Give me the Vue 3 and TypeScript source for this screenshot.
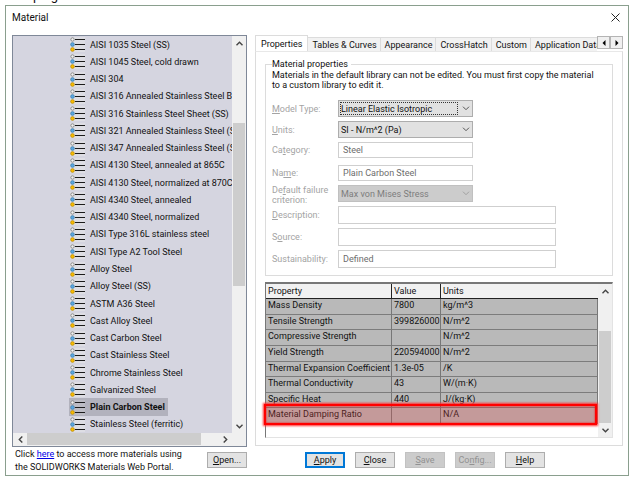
<script setup lang="ts">
import { ref } from 'vue'

interface Field {
  id: string
  label: [string, string, string]
  kind: 'select' | 'input'
  value: string
  disabled?: boolean
  wide?: boolean
  spaced?: boolean
}

const materials: string[] = [
  'AISI 1035 Steel (SS)',
  'AISI 1045 Steel, cold drawn',
  'AISI 304',
  'AISI 316 Annealed Stainless Steel Bar (SS)',
  'AISI 316 Stainless Steel Sheet (SS)',
  'AISI 321 Annealed Stainless Steel (SS)',
  'AISI 347 Annealed Stainless Steel (SS)',
  'AISI 4130 Steel, annealed at 865C',
  'AISI 4130 Steel, normalized at 870C',
  'AISI 4340 Steel, annealed',
  'AISI 4340 Steel, normalized',
  'AISI Type 316L stainless steel',
  'AISI Type A2 Tool Steel',
  'Alloy Steel',
  'Alloy Steel (SS)',
  'ASTM A36 Steel',
  'Cast Alloy Steel',
  'Cast Carbon Steel',
  'Cast Stainless Steel',
  'Chrome Stainless Steel',
  'Galvanized Steel',
  'Plain Carbon Steel',
  'Stainless Steel (ferritic)',
]
const selected = ref('Plain Carbon Steel')

const tabs: string[] = ['Properties', 'Tables & Curves', 'Appearance', 'CrossHatch', 'Custom', 'Application Data']
const activeTab = ref('Properties')

const fields: Field[] = [
  { id: 'model', label: ['', 'M', 'odel Type:'], kind: 'select', value: 'Linear Elastic Isotropic' },
  { id: 'units', label: ['', 'U', 'nits:'], kind: 'select', value: 'SI - N/m^2 (Pa)' },
  { id: 'category', label: ['Ca', 't', 'egory:'], kind: 'input', value: 'Steel' },
  { id: 'name', label: ['Na', 'm', 'e:'], kind: 'input', value: 'Plain Carbon Steel', spaced: true },
  { id: 'failure', label: ['De', 'f', 'ault failure criterion:'], kind: 'select', value: 'Max von Mises Stress', disabled: true },
  { id: 'description', label: ['', 'D', 'escription:'], kind: 'input', value: '', wide: true },
  { id: 'source', label: ['S', 'o', 'urce:'], kind: 'input', value: '', wide: true },
  { id: 'sustainability', label: ['Sustainability:', '', ''], kind: 'input', value: 'Defined', wide: true },
]

const rows: [string, string, string][] = [
  ['Mass Density', '7800', 'kg/m^3'],
  ['Tensile Strength', '399826000', 'N/m^2'],
  ['Compressive Strength', '', 'N/m^2'],
  ['Yield Strength', '220594000', 'N/m^2'],
  ['Thermal Expansion Coefficient', '1.3e-05', '/K'],
  ['Thermal Conductivity', '43', 'W/(m·K)'],
  ['Specific Heat', '440', 'J/(kg·K)'],
  ['Material Damping Ratio', '', 'N/A'],
]
</script>

<template>
  <main class="page">
    <p class="caption">Damping</p>
    <section class="dialog" role="dialog" aria-labelledby="title">
      <header class="titlebar">
        <h1 id="title">Material</h1>
        <button class="close" type="button" aria-label="Close">
          <svg width="9" height="9" viewBox="0 0 9 9"><path d="M.5 .5l8 8M8.5 .5l-8 8" stroke="#222" fill="none" /></svg>
        </button>
      </header>

      <div class="body">
        <div class="left">
          <div class="tree">
            <div class="tree-main">
              <ul class="list">
                <li v-for="m in materials" :key="m">
                  <button type="button" class="item" :class="{ selected: m === selected }" @click="selected = m">
                    <svg width="15" height="15" viewBox="0 0 15 15">
                      <rect width="15" height="15" fill="#dedee4" />
                      <path d="M5 2.500h10M5 7.500h10M5 12.500h10" stroke="#1c1c1c" stroke-width="1.200" />
                      <circle cx="2.500" cy="2.500" r="1.700" fill="#f2f2f2" stroke="#777" stroke-width=".8" />
                      <circle cx="2.500" cy="7.500" r="1.900" fill="#5aa6e0" stroke="#3d779f" stroke-width=".6" />
                      <circle cx="2.500" cy="12.500" r="1.900" fill="#f7bb00" stroke="#a98212" stroke-width=".6" />
                    </svg>
                    <span>{{ m }}</span>
                  </button>
                </li>
              </ul>
              <div class="vbar">
                <button type="button" class="arrow" aria-label="Scroll up">
                  <svg width="7" height="5" viewBox="0 0 7 5"><path d="M.5 4.300l3-3 3 3" /></svg>
                </button>
                <i class="gap-a"></i><i class="thumb thumb-a"></i><i class="gap-b"></i>
                <button type="button" class="arrow" aria-label="Scroll down">
                  <svg width="7" height="5" viewBox="0 0 7 5"><path d="M.5 .7l3 3 3-3" /></svg>
                </button>
              </div>
            </div>
            <div class="hbar">
              <button type="button" class="arrow" aria-label="Scroll left">
                <svg width="5" height="7" viewBox="0 0 5 7"><path d="M4.300 .5l-3 3 3 3" /></svg>
              </button>
              <i class="thumb thumb-h"></i><i class="gap-h"></i>
              <button type="button" class="arrow" aria-label="Scroll right">
                <svg width="5" height="7" viewBox="0 0 5 7"><path d="M.7 .5l3 3-3 3" /></svg>
              </button>
            </div>
          </div>
          <div class="portal">
            <p>Click <a href="#">here</a> to access more materials using the SOLIDWORKS Materials Web Portal.</p>
            <button type="button" class="btn"><u>O</u>pen...</button>
          </div>
        </div>

        <div class="right">
          <div class="tabs">
            <div class="tablist" role="tablist">
              <button
                v-for="t in tabs"
                :key="t"
                type="button"
                role="tab"
                class="tab"
                :class="{ active: t === activeTab }"
                :aria-selected="t === activeTab"
                @click="activeTab = t"
              >{{ t }}</button>
            </div>
            <div class="spin">
              <button type="button" aria-label="Previous tabs"><svg width="4" height="6" viewBox="0 0 4 6"><path d="M3.500 0v6L.5 3z" /></svg></button>
              <button type="button" aria-label="Next tabs"><svg width="4" height="6" viewBox="0 0 4 6"><path d="M.5 0v6l3-3z" /></svg></button>
            </div>
          </div>

          <div class="panel">
            <fieldset class="group">
              <legend>Material properties</legend>
              <p class="note">Materials in the default library can not be edited. You must first copy the material to a custom library to edit it.</p>
              <div class="form">
                <div v-for="f in fields" :key="f.id" class="field" :class="{ wide: f.wide, spaced: f.spaced }">
                  <label :for="f.id">{{ f.label[0] }}<u>{{ f.label[1] }}</u>{{ f.label[2] }}</label>
                  <div v-if="f.kind === 'select'" class="select" :class="{ focus: f.id === 'model', off: f.disabled }">
                    <select :id="f.id" :disabled="f.disabled"><option>{{ f.value }}</option></select>
                    <svg width="8" height="5" viewBox="0 0 8 5"><path d="M1 .7l3 3 3-3" /></svg>
                  </div>
                  <input v-else :id="f.id" type="text" :value="f.value" readonly />
                </div>
              </div>
            </fieldset>

            <div class="grid">
              <table>
                <colgroup><col class="c1" /><col class="c2" /><col /></colgroup>
                <thead>
                  <tr><th>Property</th><th>Value</th><th>Units</th></tr>
                </thead>
                <tbody>
                  <tr v-for="r in rows" :key="r[0]">
                    <td v-for="(c, i) in r" :key="i">{{ c }}</td>
                  </tr>
                </tbody>
              </table>
              <div class="vbar grid-bar">
                <button type="button" class="arrow" aria-label="Scroll up">
                  <svg width="7" height="5" viewBox="0 0 7 5"><path d="M.5 4.300l3-3 3 3" /></svg>
                </button>
                <i class="gap-c"></i><i class="thumb thumb-c"></i>
                <button type="button" class="arrow" aria-label="Scroll down">
                  <svg width="7" height="5" viewBox="0 0 7 5"><path d="M.5 .7l3 3 3-3" /></svg>
                </button>
              </div>
              <div class="highlight"></div>
            </div>
          </div>

          <div class="actions">
            <button type="button" class="btn primary"><u>A</u>pply</button>
            <button type="button" class="btn"><u>C</u>lose</button>
            <button type="button" class="btn" disabled><u>S</u>ave</button>
            <button type="button" class="btn" disabled>Co<u>n</u>fig...</button>
            <button type="button" class="btn"><u>H</u>elp</button>
          </div>
        </div>
      </div>
    </section>
  </main>
</template>

<style>
body {
  margin: 0;
  background: #fff;
}
</style>

<style scoped>
.page {
  position: relative;
  padding: 5px 7px 7px 5px;
  overflow: hidden;
  font-family: Roboto, 'Open Sans', sans-serif;
  font-size: 9px;
  line-height: 12px;
  color: #111;
}
.page *,
.page {
  box-sizing: border-box;
}
p,
h1,
ul {
  margin: 0;
  padding: 0;
}
button,
input,
select {
  font: inherit;
  color: inherit;
  margin: 0;
  padding: 0;
  border-radius: 0;
}
.caption {
  position: absolute;
  top: -12px;
  left: 6px;
  font-size: 13px;
  line-height: 16px;
}
.dialog {
  border: 1px solid #8a9f8e;
  background: #fff;
  padding: 0 5px 0 6px;
}
.titlebar {
  display: flex;
  justify-content: space-between;
  align-items: center;
  height: 29px;
  padding: 0 3px 6px 0;
}
.titlebar h1 {
  font-size: 10px;
  font-weight: 400;
}
.close {
  display: flex;
  border: 0;
  background: none;
}
.body {
  display: flex;
  gap: 8px;
}
.left {
  flex: 0 0 235px;
  min-width: 0;
}
.tree {
  border: 1px solid #7f8898;
  background: #d5d5e0;
}
.tree-main {
  display: flex;
  height: 397px;
}
.list {
  flex: 1;
  min-width: 0;
  display: grid;
  grid-auto-rows: 1fr;
  list-style: none;
  overflow: hidden;
  padding-left: 56px;
}
.list li {
  min-height: 0;
  min-width: 0;
  display: flex;
}
.item {
  display: flex;
  align-items: center;
  gap: 5px;
  padding: 0 3px 0 1px;
  border: 0;
  background: none;
  white-space: nowrap;
}
.item svg {
  flex: none;
}
.item.selected {
  background: #b2b2bd;
  font-weight: 700;
}
.item.selected rect {
  fill: #bcbcc4;
}
.vbar {
  flex: 0 0 14px;
  display: flex;
  flex-direction: column;
  background: #f0f0f0;
  padding: 0 1px;
}
.hbar {
  display: flex;
  height: 13px;
  background: #f0f0f0;
  padding: 0 14px 1px 0;
}
.thumb {
  background: #cdcdcd;
}
.arrow {
  flex: 0 0 14px;
  display: flex;
  align-items: center;
  justify-content: center;
  border: 0;
  background: none;
}
.vbar .arrow {
  width: 12px;
}
.arrow path {
  fill: none;
  stroke: #444;
  stroke-width: 1.4;
}
.gap-a {
  flex: 73;
}
.thumb-a {
  flex: 162;
}
.gap-b {
  flex: 132;
}
.thumb-h {
  flex: 174;
}
.gap-h {
  flex: 17;
}
.gap-c {
  flex: 33;
}
.thumb-c {
  flex: 92;
}
.portal {
  display: flex;
  justify-content: space-between;
  align-items: flex-start;
  padding: 1px 0 0 3px;
}
.portal p {
  line-height: 13px;
  width: 176px;
}
.portal a {
  color: #0000e6;
}
.portal .btn {
  margin-top: 4px;
}
.btn {
  flex: 0 0 40px;
  height: 16px;
  line-height: 12px;
  border: 1px solid #adadad;
  background: #e3e3e3;
  text-align: center;
  white-space: nowrap;
}
.btn.primary {
  border: 2px solid #0078d7;
  line-height: 10px;
}
.btn:disabled {
  background: #cccccc;
  border-color: #c2c2c2;
  color: #929292;
}
.right {
  flex: 1;
  min-width: 0;
}
.tabs {
  display: flex;
  height: 16px;
}
.tablist {
  flex: 1;
  min-width: 0;
  display: flex;
  align-items: flex-end;
  overflow: hidden;
}
.tab {
  flex: none;
  height: 14px;
  padding: 0 3px 0 4px;
  border: 1px solid #dcdcdc;
  border-left: 0;
  border-bottom: 0;
  background: #f2f2f2;
  white-space: nowrap;
}
.tab.active {
  height: 16px;
  padding: 0 5px;
  border-left: 1px solid #dcdcdc;
  background: #fff;
}
.spin {
  display: flex;
  height: 13px;
  margin-top: 1px;
}
.spin button {
  display: flex;
  align-items: center;
  justify-content: center;
  width: 13px;
  border: 1px solid #b4b4b4;
  background: #f0f0f0;
}
.panel {
  border: 1px solid #dcdcdc;
  border-top-color: #e8e8e8;
  padding: 6px 9px 7px;
}
.group {
  margin: 0;
  min-width: 0;
  padding: 0 12px 7px 6px;
  border: 1px solid #dcdcdc;
}
.group legend {
  padding: 0 3px 0 0;
}
.note {
  line-height: 10px;
}
.form {
  display: flex;
  flex-direction: column;
  gap: 4px;
  padding-top: 10px;
}
.field {
  display: grid;
  grid-template-columns: 66px 135px;
  align-items: center;
}
.field.wide {
  grid-template-columns: 66px 218px;
}
.field.spaced {
  margin-top: 3px;
}
.field label {
  color: #a4a4a4;
  line-height: 10px;
}
.field:nth-child(5) label {
  align-self: start;
  margin-bottom: -3px;
}
.field input {
  width: 100%;
  height: 16px;
  padding: 0 4px;
  border: 1px solid #cfcfcf;
  background: #fff;
  color: #6d6d6d;
  outline: 0;
}
.field.wide input {
  height: 18px;
}
.select {
  display: grid;
  align-items: center;
  height: 17px;
  border: 1px solid #adadad;
  background: #e1e1e1;
}
.select select {
  grid-area: 1 / 1;
  appearance: none;
  width: 100%;
  height: 15px;
  padding: 0 16px 0 2px;
  border: 0;
  background: none;
  opacity: 1;
}
.select svg {
  grid-area: 1 / 1;
  justify-self: end;
  margin-right: 2px;
  pointer-events: none;
}
.select path {
  fill: none;
  stroke: #555;
}
.select.focus select {
  width: auto;
  height: 13px;
  margin: 0 14px 0 1px;
  padding: 0 0 0 1px;
  outline: 1px dotted #333;
  outline-offset: -1px;
}
.select.off {
  background: #cccccc;
  border-color: #c0c0c0;
  color: #7d7d7d;
}
.select.off path {
  stroke: #a0a0a0;
}
.grid {
  position: relative;
  display: flex;
  align-items: flex-start;
  margin-top: 6px;
  height: 156px;
  border-top: 2px solid #777;
  border-left: 1px solid #777;
  border-right: 1px solid #e3e3e3;
  border-bottom: 1px solid #e3e3e3;
}
table {
  flex: 1;
  width: 0;
  height: 140px;
  table-layout: fixed;
  border-collapse: separate;
  border-spacing: 0;
}
.c1 {
  width: 126px;
}
.c2 {
  width: 49px;
}
th,
td {
  padding: 0 0 0 2px;
  text-align: left;
  font-weight: 400;
  line-height: 12px;
  white-space: nowrap;
  border-right: 1px solid #777;
}
th {
  height: 15px;
  background: #f1f1f1;
  border-right-color: #222;
  border-bottom: 1px solid #222;
}
th:last-child {
  border-right: 0;
}
td {
  background: #b9b9b9;
  border-bottom: 1px solid #7c7c7c;
  vertical-align: top;
}
.grid-bar {
  align-self: stretch;
}
.highlight {
  position: absolute;
  left: -2px;
  right: 15px;
  bottom: 12px;
  height: 21px;
  border: 2px solid #f00;
  background: rgba(226, 70, 70, 0.27);
  box-shadow: 0 0 2px 1px #ff3030, inset 0 0 2px #f00;
}
.actions {
  display: flex;
  gap: 10px;
  padding: 6px 0 7px 50px;
}
</style>
